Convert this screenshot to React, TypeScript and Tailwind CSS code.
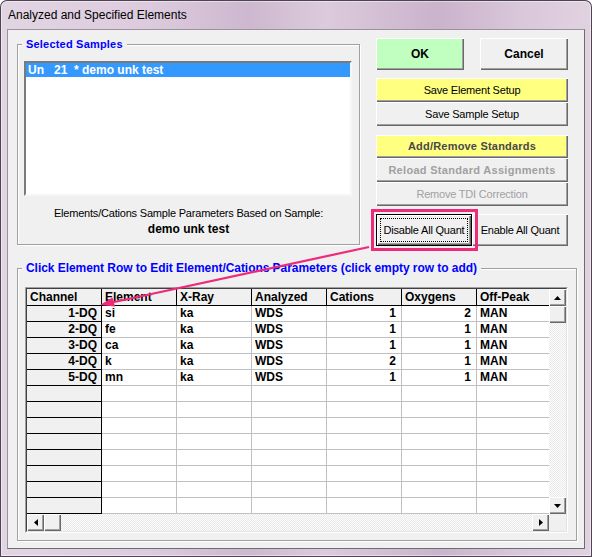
import React from 'react';

const raised =
  'shadow-[inset_1px_1px_0_#ffffff,inset_-1px_-1px_0_#696969,inset_-2px_-2px_0_#a0a0a0]';

interface Row {
  ch: string;
  el: string;
  xr: string;
  an: string;
  cat: string;
  oxy: string;
  off: string;
}

const rows: Row[] = [
  { ch: '1-DQ', el: 'si', xr: 'ka', an: 'WDS', cat: '1', oxy: '2', off: 'MAN' },
  { ch: '2-DQ', el: 'fe', xr: 'ka', an: 'WDS', cat: '1', oxy: '1', off: 'MAN' },
  { ch: '3-DQ', el: 'ca', xr: 'ka', an: 'WDS', cat: '1', oxy: '1', off: 'MAN' },
  { ch: '4-DQ', el: 'k', xr: 'ka', an: 'WDS', cat: '2', oxy: '1', off: 'MAN' },
  { ch: '5-DQ', el: 'mn', xr: 'ka', an: 'WDS', cat: '1', oxy: '1', off: 'MAN' },
];

const emptyRows: Row[] = Array.from({ length: 8 }, () => ({
  ch: '', el: '', xr: '', an: '', cat: '', oxy: '', off: '',
}));

const headers = ['Channel', 'Element', 'X-Ray', 'Analyzed', 'Cations', 'Oxygens', 'Off-Peak'];

function Arrow({ dir }: { dir: 'up' | 'down' | 'left' | 'right' }) {
  const pts = {
    up: '0,4 7,4 3.5,0',
    down: '0,0 7,0 3.5,4',
    left: '4,0 4,7 0,3.5',
    right: '0,0 0,7 4,3.5',
  }[dir];
  const w = dir === 'up' || dir === 'down' ? 7 : 4;
  const h = dir === 'up' || dir === 'down' ? 4 : 7;
  return (
    <svg width={w} height={h} viewBox={`0 0 ${w} ${h}`}>
      <polygon points={pts} fill="#000" />
    </svg>
  );
}

function ScrollBtn({ dir }: { dir: 'up' | 'down' | 'left' | 'right' }) {
  return (
    <div className={`w-[17px] h-[17px] shrink-0 bg-[#f0f0f0] flex items-center justify-center ${raised}`}>
      <Arrow dir={dir} />
    </div>
  );
}

const track =
  'bg-[repeating-conic-gradient(#fdfdfd_0%_25%,#e9e9e9_0%_50%)] bg-[length:2px_2px]';

function DataRow({ r }: { r: Row }) {
  const cell = 'w-[75px] shrink-0 h-[16px] border-r border-b border-[#c0c0c0] bg-white leading-[15px] px-[3px] overflow-hidden';
  return (
    <div className="flex">
      <div className="w-[75px] shrink-0 h-[16px] border-r border-b border-black bg-[#f0f0f0] leading-[15px] text-right pr-[4px]">
        {r.ch}
      </div>
      <div className={cell}>{r.el}</div>
      <div className={cell}>{r.xr}</div>
      <div className={cell}>{r.an}</div>
      <div className={`${cell} text-right pr-[5px]`}>{r.cat}</div>
      <div className={`${cell} text-right pr-[5px]`}>{r.oxy}</div>
      <div className={cell}>{r.off}</div>
    </div>
  );
}

export default function App() {
  return (
    <div className="relative w-[592px] h-[557px] overflow-hidden rounded-t-[7px] font-['Liberation_Sans',Arial,sans-serif] text-black bg-[linear-gradient(90deg,#e2d5e3_0%,#dccbdd_25%,#cdb8cf_42%,#dccbdc_55%,#cab3cc_74%,#d9c7da_88%,#e1d2e1_100%)] shadow-[inset_0_0_0_1px_#4e4352,inset_0_0_0_2px_rgba(255,255,255,0.45)]">
      {/* title bar */}
      <div className="h-[29px] flex items-center pl-[8px] text-[12px] pt-[1px]">
        Analyzed and Specified Elements
      </div>

      {/* client area */}
      <div className="ml-[7px] w-[578px] h-[520px] border border-t-[#9d909f] border-l-[#9d909f] border-r-[#6d6d6d] border-b-[#6d6d6d] bg-[#f0f0f0]">
        <div className="flex items-start pt-[7px] pl-[9px]">
          {/* Selected Samples */}
          <fieldset className="w-[343px] h-[208px] border border-[#a0a0a0] shadow-[inset_1px_1px_0_#ffffff,1px_1px_0_#ffffff]">
            <legend className="ml-[4px] px-[4px] bg-[#f0f0f0] text-[11px] leading-[14px] font-bold tracking-[0.2px] text-[#0000ff]">
              Selected Samples
            </legend>
            <div className="ml-[6px] mt-[10px] w-[328px] h-[135px] bg-white border-2 border-t-[#7a7a7a] border-l-[#7a7a7a] border-r-[#f6f6f6] border-b-[#f6f6f6]">
              <div className="h-[14px] bg-[#3399ff] text-white text-[12px] font-bold leading-[14px] pl-[2px] whitespace-pre">
                {'Un   21  * demo unk test'}
              </div>
            </div>
            <div className="mt-[9px] text-center text-[11px] leading-[16px] tracking-[-0.2px]">
              Elements/Cations Sample Parameters Based on Sample:
            </div>
            <div className="text-center text-[12px] font-bold leading-[16px]">demo unk test</div>
          </fieldset>

          {/* buttons */}
          <div className="ml-[16px] w-[192px] pt-[1px] flex flex-col">
            <div className="flex gap-[16px]">
              <button className={`w-[88px] h-[32px] bg-[#c0ffc0] text-[12px] font-bold ${raised}`}>OK</button>
              <button className={`w-[88px] h-[32px] bg-[#f0f0f0] text-[12px] font-bold ${raised}`}>Cancel</button>
            </div>
            <button className={`mt-[8px] h-[24px] bg-[#ffff80] text-[11px] tracking-[-0.2px] ${raised}`}>
              Save Element Setup
            </button>
            <button className={`h-[24px] bg-[#f0f0f0] text-[11px] tracking-[-0.2px] ${raised}`}>
              Save Sample Setup
            </button>
            <button className={`mt-[9px] h-[23px] bg-[#ffff80] text-[11px] font-bold tracking-[0.2px] text-[#4a4a4a] ${raised}`}>
              Add/Remove Standards
            </button>
            <button className={`h-[24px] bg-[#f0f0f0] text-[11px] font-bold tracking-[0.3px] text-[#a0a0a0] ${raised}`}>
              Reload Standard Assignments
            </button>
            <button className={`h-[24px] bg-[#f0f0f0] text-[11px] tracking-[-0.2px] text-[#a0a0a0] ${raised}`}>
              Remove TDI Correction
            </button>
            <div className="mt-[8px] flex">
              <button className="w-[96px] h-[32px] bg-[#f0f0f0] border border-black p-[3px] shadow-[inset_1px_1px_0_#ffffff,inset_-1px_-1px_0_#696969,inset_-2px_-2px_0_#a0a0a0]">
                <div className="h-full border border-dotted border-black flex items-center justify-center text-[11px] tracking-[-0.2px]">
                  Disable All Quant
                </div>
              </button>
              <button className={`w-[96px] h-[32px] bg-[#f0f0f0] text-[11px] tracking-[-0.2px] ${raised}`}>
                Enable All Quant
              </button>
            </div>
          </div>
        </div>

        {/* element grid group */}
        <div className="pl-[9px] mt-[15px]">
          <fieldset className="w-[560px] h-[280px] border border-[#a0a0a0] shadow-[inset_1px_1px_0_#ffffff,1px_1px_0_#ffffff]">
            <legend className="ml-[4px] px-[4px] bg-[#f0f0f0] text-[12px] leading-[14px] font-bold tracking-[-0.05px] text-[#0000ff]">
              Click Element Row to Edit Element/Cations Parameters (click empty row to add)
            </legend>
            <div className="ml-[7px] mt-[12px] w-[543px] h-[246px] border border-t-[#a0a0a0] border-l-[#a0a0a0] border-r-white border-b-white">
              <div className="w-[541px] h-[244px] border border-t-[#404040] border-l-[#404040] border-r-[#e3e3e3] border-b-[#e3e3e3] flex flex-col">
                <div className="flex h-[225px]">
                  <div className="w-[522px] h-[225px] overflow-hidden text-[12px] font-bold">
                    <div className="flex">
                      {headers.map((h) => (
                        <div
                          key={h}
                          className="w-[75px] shrink-0 h-[17px] border-r border-b border-black bg-[#f0f0f0] leading-[16px] pl-[3px]"
                        >
                          {h}
                        </div>
                      ))}
                    </div>
                    {[...rows, ...emptyRows].map((r, i) => (
                      <DataRow key={i} r={r} />
                    ))}
                  </div>
                  {/* vertical scrollbar */}
                  <div className={`w-[17px] h-[225px] flex flex-col ${track}`}>
                    <ScrollBtn dir="up" />
                    <div className={`w-[17px] h-[17px] bg-[#f0f0f0] ${raised}`} />
                    <div className="flex-1" />
                    <ScrollBtn dir="down" />
                  </div>
                </div>
                {/* horizontal scrollbar */}
                <div className="flex h-[17px]">
                  <div className={`w-[522px] h-[17px] flex ${track}`}>
                    <ScrollBtn dir="left" />
                    <div className={`w-[17px] h-[17px] bg-[#f0f0f0] ${raised}`} />
                    <div className="flex-1" />
                    <ScrollBtn dir="right" />
                  </div>
                  <div className="w-[17px] h-[17px] bg-[#f0f0f0]" />
                </div>
              </div>
            </div>
          </fieldset>
        </div>
      </div>

      {/* annotation: highlight box and arrow */}
      <div className="absolute left-[371px] top-[209px] w-[107px] h-[42px] border-[3px] border-[#ee2a7b] pointer-events-none" />
      <svg className="absolute left-0 top-0 pointer-events-none" width="592" height="557" viewBox="0 0 592 557">
        <line x1="369" y1="247" x2="112" y2="302.5" stroke="#ee2a7b" strokeWidth="2.2" />
        <polygon points="100,305 115,306.5 112.5,297.5" fill="#ee2a7b" />
      </svg>
    </div>
  );
}
